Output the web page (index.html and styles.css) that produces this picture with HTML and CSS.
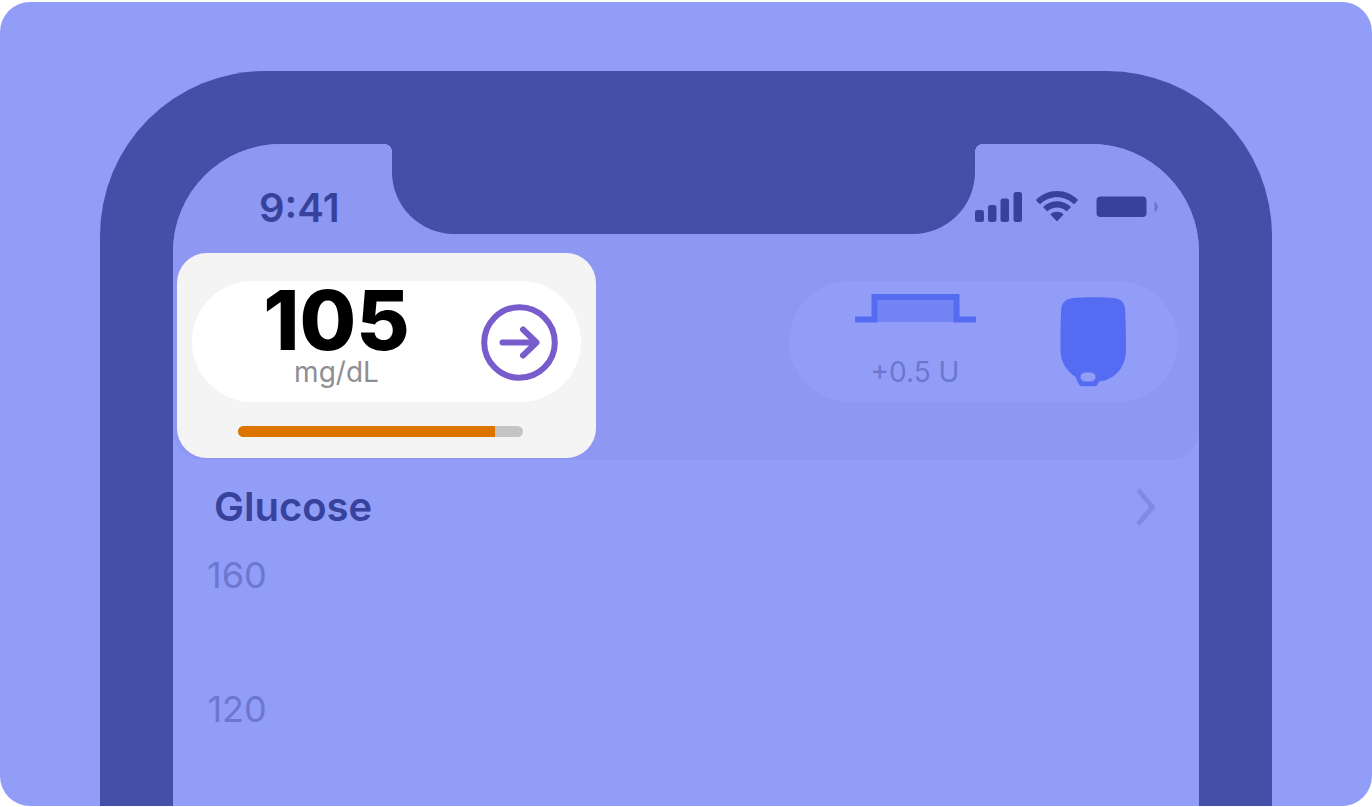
FILE: index.html
```html
<!DOCTYPE html>
<html lang="en">
<head>
<meta charset="utf-8">
<meta name="viewport" content="width=device-width, initial-scale=1">
<title>Glucose</title>
<link rel="stylesheet" href="styles.css">
</head>
<body>
<main class="stage">
  <div class="phone">
    <div class="screen">
      <header class="top">
        <div class="status">
          <div class="status-left"><time class="time">9:41</time></div>
          <div class="notch"></div>
          <div class="status-right">
            <svg class="signal" width="47" height="30" viewBox="0 0 47 30" role="img" aria-label="Signal">
              <rect x="0" y="18" width="9" height="12" rx="2.5"/>
              <rect x="13" y="13" width="8.500" height="17" rx="2.500"/>
              <rect x="25.500" y="6.500" width="8.500" height="23.500" rx="2.500"/>
              <rect x="38.500" y="0" width="8.500" height="30" rx="2.500"/>
            </svg>
            <svg class="wifi" width="42" height="31" viewBox="0 0 42 31" role="img" aria-label="Wi-Fi">
              <path d="M21 0C13 0 5.800 3.200.4 8.500q-.6.600 0 1.200l3.200 3.200q.4.400.8 0C8.900 8.600 14.700 6.200 21 6.200s12.100 2.400 16.600 6.700q.4.400.8 0l3.200-3.200q.6-.6 0-1.200C36.200 3.200 29 0 21 0z"/>
              <path d="M21 10.300c-5.200 0-9.900 2-13.400 5.200q-.6.600 0 1.200l3.400 3.400q.4.400.8 0c2.500-2.200 5.600-3.500 9.200-3.500s6.700 1.300 9.200 3.500q.4.400.8 0l3.400-3.400q.6-.6 0-1.200C30.900 12.300 26.200 10.300 21 10.300z"/>
              <path d="M21 20.800c-2.400 0-4.600.9-6.200 2.200q-.6.500 0 1.100l5.800 6q.4.400.8 0l5.800-6q.6-.6 0-1.100C25.600 21.700 23.400 20.800 21 20.800z"/>
            </svg>
            <svg class="battery" width="62" height="21" viewBox="0 0 62 21" role="img" aria-label="Battery">
              <rect x="0.500" y="0.500" width="50" height="20.500" rx="4"/>
              <path class="battery-tip" d="M58.500 5.500c2.200 1 3.300 3 3.300 5.300s-1.100 4.200-3.300 5.200z"/>
            </svg>
          </div>
        </div>

        <div class="cards">
          <section class="card card-active">
            <div class="pill pill-glucose">
              <div class="reading">
                <strong class="value">105</strong>
                <span class="unit">mg/dL</span>
              </div>
              <svg class="trend" width="77" height="77" viewBox="0 0 77 77" role="img" aria-label="Steady">
                <circle cx="38.500" cy="38.500" r="35.300"/>
                <path d="M21.500 38.500H55M42 25.500l13.500 13L42 51.500"/>
              </svg>
            </div>
            <div class="progress" role="progressbar" aria-valuenow="90" aria-valuemin="0" aria-valuemax="100" aria-label="Progress">
              <div class="progress-fill" style="width: 90%"></div>
            </div>
          </section>

          <section class="card">
            <div class="pill pill-insulin">
              <div class="delivery">
                <svg width="121" height="29" viewBox="0 0 121 29" aria-hidden="true">
                  <path class="wave-area" d="M19 3h83v25H19z"/>
                  <path class="wave-line" d="M0 25.500h19.500V3h82v22.500H121"/>
                </svg>
                <span class="unit unit-dim">+0.5 U</span>
              </div>
              <svg class="pod" width="67" height="90" viewBox="0 0 67 90" role="img" aria-label="Pod">
                <path fill-rule="evenodd" d="M12 1.200C24-.2 43-.2 55 1.200c6 .8 9.500 4.500 10 10.300.7 12 1 25 1 41.500C66 70 55 83 39 84.500l-1.500 3q-1 1.800-3 1.800H22q-2.200 0-3-1.800L15.500 80C6 73.500.5 64 .5 53 .4 36 .6 23 1.300 11.500 2 5.500 6 2 12 1.200zM25 75.500c-6 0-6 9 0 9h6c6 0 6-9 0-9z"/>
              </svg>
            </div>
          </section>
        </div>
      </header>

      <section class="chart">
        <div class="chart-head">
          <h1 class="chart-title">Glucose</h1>
          <button class="more" type="button" aria-label="Glucose details">
            <svg width="20" height="38" viewBox="0 0 20 38" aria-hidden="true">
              <path d="M3.500 3.500l13 15.500-13 15.500"/>
            </svg>
          </button>
        </div>
        <div class="axis">
          <span>160</span>
          <span>120</span>
        </div>
      </section>
    </div>
  </div>
</main>
</body>
</html>
```

FILE: styles.css
```css
* {
  box-sizing: border-box;
}

body {
  --sky: #929df7;
  --sky-shade: #8e98f3;
  --frame: #444fa8;
  --ink: #37429c;
  --ink-dim: #6c77cf;
  --blue: #546bf2;
  display: flex;
  min-height: 100vh;
  margin: 0;
  padding: 2px 0 1px;
  background: #fff;
  font-family: Inter, "Liberation Sans", sans-serif;
}

svg {
  display: block;
  flex: none;
}

.stage {
  display: flex;
  flex: 1;
  padding: 69px 100px 0;
  border-radius: 30px;
  background: var(--sky);
  overflow: hidden;
}

.phone {
  display: flex;
  flex: 1;
  padding: 73px 73px 0;
  border-radius: 165px 165px 0 0;
  background: var(--frame);
}

.screen {
  flex: 1;
  border-radius: 108px 108px 0 0;
  background: var(--sky);
  overflow: hidden;
}

.top {
  padding-bottom: 2px;
  border-radius: 0 0 30px 30px;
  background: var(--sky-shade);
}

.status {
  display: flex;
  align-items: flex-start;
  height: 109px;
}

.status-left {
  flex: 0 0 219px;
  padding: 40px 0 0 86px;
}

.time {
  color: var(--ink);
  font-size: 40px;
  font-weight: 600;
  line-height: 48px;
}

.notch {
  position: relative;
  flex: 1;
  height: 90px;
  border-radius: 0 0 62px 62px;
  background: var(--frame);
}

.notch::before,
.notch::after {
  content: "";
  position: absolute;
  top: 0;
  width: 8px;
  height: 8px;
}

.notch::before {
  right: 100%;
  background: radial-gradient(circle at 0 100%, transparent 8px, var(--frame) 8px);
}

.notch::after {
  left: 100%;
  background: radial-gradient(circle at 100% 100%, transparent 8px, var(--frame) 8px);
}

.status-right {
  display: flex;
  flex: 0 0 223px;
  align-items: center;
  justify-content: flex-end;
  padding: 47px 41px 0 0;
  fill: var(--ink);
}

.signal {
  margin-right: 14px;
}

.wifi {
  margin-right: 18px;
}

.battery-tip {
  fill: var(--ink-dim);
}

.cards {
  display: flex;
  justify-content: space-between;
  padding: 0 6px 0 4px;
}

.card {
  flex: 0 1 419px;
  padding: 28px 15px 21px;
  border-radius: 30px;
}

.card-active {
  background: #f4f4f4;
}

.pill {
  display: flex;
  height: 121px;
  border-radius: 61px;
  background: var(--sky);
}

.pill-glucose {
  align-items: center;
  padding: 1px 23px 0 0;
  background: #fff;
}

.pill-insulin {
  align-items: flex-start;
  gap: 19px;
  padding-right: 51px;
}

.reading,
.delivery {
  display: flex;
  flex: 1;
  flex-direction: column;
  align-items: center;
  align-self: stretch;
}

.reading {
  padding-top: 9px;
}

.delivery {
  justify-content: space-between;
  padding: 13px 0 10px;
}

.value {
  color: #000;
  font-size: 82px;
  font-weight: 800;
  line-height: 60px;
}

.unit {
  color: #8e8e93;
  font-size: 28px;
  line-height: 42px;
}

.unit-dim {
  color: var(--ink-dim);
  line-height: 40px;
}

.trend {
  fill: none;
  stroke: #785ccc;
  stroke-width: 6;
  stroke-linecap: round;
  stroke-linejoin: round;
}

.wave-area {
  fill: #7584f4;
}

.wave-line {
  fill: none;
  stroke: var(--blue);
  stroke-width: 6;
}

.pod {
  margin-top: 16px;
  fill: var(--blue);
}

.progress {
  height: 11px;
  margin: 24px 58px 0 46px;
  border-radius: 6px;
  background: #c4c4c4;
  overflow: hidden;
}

.progress-fill {
  height: 100%;
  background: #dc7500;
}

.chart {
  padding: 19px 43px 0 34px;
}

.chart-head {
  display: flex;
  align-items: center;
  justify-content: space-between;
  padding-left: 7px;
}

.chart-title {
  margin: 0;
  color: var(--ink);
  font-size: 40px;
  font-weight: 600;
  line-height: 56px;
}

.more {
  padding: 0;
  border: 0;
  background: none;
  cursor: pointer;
}

.more path {
  fill: none;
  stroke: #7f8ae4;
  stroke-width: 5;
  stroke-linecap: round;
  stroke-linejoin: round;
}

.axis {
  display: inline-flex;
  flex-direction: column;
  gap: 90px;
  padding-top: 18px;
  color: var(--ink-dim);
  font-size: 36px;
  line-height: 44px;
  text-align: right;
}
```
